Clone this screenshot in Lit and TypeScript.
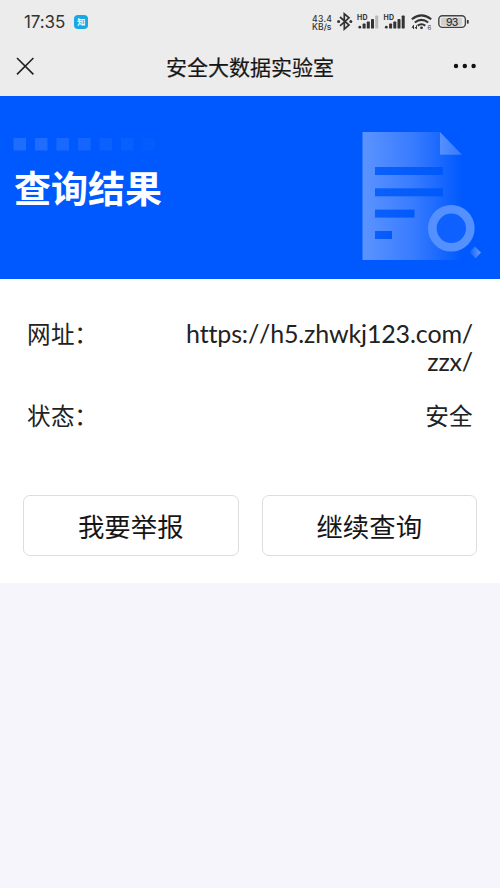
import { LitElement, html, css, svg } from "lit";
import { customElement, property } from "lit/decorators.js";

@customElement("status-bar")
class StatusBar extends LitElement {
  static styles = css`
    :host { display: flex; height: 44px; padding: 0 31px 0 24px; justify-content: space-between; color: #333; }
    .left { display: flex; align-items: center; gap: 9px; height: 44px; }
    .time { font: 400 17px/20px Inter, sans-serif; letter-spacing: -0.1px; }
    .app { box-sizing: border-box; width: 14px; height: 14px; border-radius: 4px; background: #18a9e4; color: #fff; font: bold 8px/14px "Noto Sans CJK SC", sans-serif; text-align: center; }
    svg { display: block; width: 160px; height: 44px; }
    text { font-family: Inter, sans-serif; fill: #333; }
    .rate { font-size: 8.6px; font-weight: 500; }
    .hd { font-size: 7px; font-weight: 700; }
    .battery { font-size: 10.5px; font-weight: 500; }
    .tiny { font-size: 6px; }
  `;

  private bars(x: number, last: string) {
    return svg`
      <circle cx=${x + 2.2} cy="27.2" r="1.4" fill="#333"/>
      ${[5, 7, 9.5, 13].map((h, i) => svg`
        <rect x=${x + 5 + i * 4.2} y=${28.6 - h} width="3" height=${h} rx=".7" fill=${i === 3 ? last : "#333"}/>`)}
    `;
  }

  render() {
    return html`
      <div class="left"><span class="time">17:35</span><span class="app">知</span></div>
      <svg viewBox="309 0 160 44">
        <text class="rate" x="312" y="21.6" textLength="20">43.4</text>
        <text class="rate" x="312" y="30.3" textLength="19.5">KB/s</text>
        <path d="M340 17l9 8-4.7 4.2V13.8l4.7 4-9 8" fill="none" stroke="#333" stroke-width="1.7"/>
        <circle cx="338.6" cy="21.5" r="1.5" fill="#333"/><circle cx="350.8" cy="21.5" r="1.5" fill="#333"/>
        <text class="hd" x="357" y="19.8" textLength="10.6">HD</text>
        ${this.bars(357.6, "#b9b9b9")}
        <text class="hd" x="383.5" y="19.8" textLength="10.6">HD</text>
        ${this.bars(384.1, "#333")}
        <g fill="none" stroke="#333" stroke-width="2">
          <path d="M411.8 19.2q9.7-7.6 19.4 0M414.8 22.5q6.7-5.2 13.4 0M417.7 25.6q3.8-2.8 7.6 0"/>
        </g>
        <circle cx="421.5" cy="27.8" r="1.4" fill="#333"/>
        <path d="M412 28l1.5-2.7V29m3-3.7V29l-1.5-2" fill="none" stroke="#333"/>
        <text class="tiny" x="427.6" y="29.8">6</text>
        <rect x="438.8" y="15.8" width="26.6" height="11.6" rx="3.6" fill="#ececec" stroke="#444" stroke-width="1.4"/>
        <rect x="441" y="17.8" width="21" height="7.6" rx="1.5" fill="#d0d0d0"/>
        <path d="M467.8 20v3.6" stroke="#333" stroke-width="1.7"/>
        <text class="battery" x="446" y="25.5" textLength="12.4">93</text>
      </svg>
    `;
  }
}

@customElement("nav-bar")
class NavBar extends LitElement {
  static styles = css`
    :host { display: grid; grid-template-columns: 20px 1fr 24px; align-items: center; height: 44px; padding: 0 23px 8px 15px; color: #161616; }
    svg { display: block; }
    .title { font: 400 21px/30px "Noto Sans CJK SC", sans-serif; text-align: center; padding-left: 12px; -webkit-text-stroke: .2px #161616; }
  `;
  render() {
    return html`
      <svg width="20" height="20" viewBox="0 0 20 20"><path d="M2 2l16.4 16.4M18.4 2L2 18.4" stroke="#222" stroke-width="1.6"/></svg>
      <div class="title">安全大数据实验室</div>
      <svg width="24" height="20" viewBox="0 0 24 20"><g fill="#111"><circle cx="3" cy="10" r="2.2"/><circle cx="11.8" cy="10" r="2.2"/><circle cx="20.6" cy="10" r="2.2"/></g></svg>
    `;
  }
}

@customElement("result-banner")
class ResultBanner extends LitElement {
  static styles = css`
    :host { box-sizing: border-box; display: flex; justify-content: space-between; height: 183px; background: #0059fe; padding: 36px 18px 0 13px; }
    .dots { display: block; margin-top: 5px; }
    h1 { margin: 9px 0 0 1px; color: #fff; font: 700 37px/54px "Noto Sans CJK SC", sans-serif; }
    svg { display: block; }
  `;
  render() {
    return html`
      <div>
        <svg class="dots" width="150" height="14" viewBox="0 0 150 14">
          ${[0.12, 0.12, 0.1, 0.08, 0.045, 0.03, 0.015].map((o, i) => svg`<rect x=${0.5 + i * 21.5} y="1" width="12.5" height="12.5" fill="#fff" fill-opacity=${o}/>`)}
        </svg>
        <h1>查询结果</h1>
      </div>
      <svg width="120" height="130" viewBox="362 132 120 130">
        <defs>
          <linearGradient id="page" x1="0" x2="1"><stop stop-color="#5c94ff"/><stop offset=".5" stop-color="#397cff"/><stop offset="1" stop-color="#0059fe"/></linearGradient>
          <linearGradient id="line" x1="0" x2="1"><stop stop-color="#0b60fc"/><stop offset="1" stop-color="#0059fa"/></linearGradient>
          <linearGradient id="fold" x1="0" x2="1"><stop stop-color="#5590ff"/><stop offset="1" stop-color="#3679ff"/></linearGradient>
          <linearGradient id="handle" x1="0" x2="1"><stop stop-color="#0f62fe"/><stop offset="1" stop-color="#649bff"/></linearGradient>
        </defs>
        <path d="M362.5 132H440v22.8h22V260h-99.5z" fill="url(#page)"/>
        <path d="M440 132v22.8h22z" fill="url(#fold)"/>
        <g fill="url(#line)"><rect x="375" y="167" width="68" height="8"/><rect x="375" y="188.3" width="68" height="8"/><rect x="375" y="209.6" width="39.5" height="8"/><rect x="375" y="231" width="17" height="8"/></g>
        <circle cx="451.3" cy="228.3" r="19" fill="#0e61fe" stroke="#5590ff" stroke-width="8.6"/>
        <path d="M474.8 246.5l6.2 6-5.3 5.8-6.2-6z" fill="url(#handle)"/>
      </svg>
    `;
  }
}

@customElement("result-row")
class ResultRow extends LitElement {
  @property() label = "";
  @property({ type: Array }) lines: string[] = [];
  @property({ type: Boolean, reflect: true }) link = false;
  static styles = css`
    :host { display: flex; justify-content: space-between; color: #222; font: 23.6px/28px "Noto Sans CJK SC", sans-serif; }
    .label { display: flex; letter-spacing: .5px; white-space: nowrap; }
    .colon { margin-left: -1px; }
    .value { text-align: right; letter-spacing: .3px; }
    :host([link]) .value { font-family: Lato, sans-serif; font-size: 25px; letter-spacing: -.16px; font-variant-ligatures: none; font-kerning: none; }
    .line { white-space: nowrap; }
  `;
  render() {
    return html`
      <div class="label">${this.label}<span class="colon">：</span></div>
      <div class="value">${this.lines.map((l) => html`<div class="line">${l}</div>`)}</div>
    `;
  }
}

@customElement("app-root")
class AppRoot extends LitElement {
  static styles = css`
    :host { display: block; height: 888px; overflow: hidden; background: #f5f5fb; }
    .chrome { height: 96px; background: #ececec; }
    .card { box-sizing: border-box; height: 304px; background: #fff; padding: 40px 23px 0; }
    .rows { display: grid; gap: 26px; padding: 0 4px; }
    .actions { display: grid; grid-template-columns: 1fr 1fr; gap: 23px; margin-top: 66px; }
    button { box-sizing: border-box; height: 61px; border: 1.5px solid #ddd; border-radius: 7px; padding: 0; background: #fff; color: #161616; font: 26.4px/38px "Noto Sans CJK SC", sans-serif; }
  `;
  render() {
    return html`
      <div class="chrome"><status-bar></status-bar><nav-bar></nav-bar></div>
      <result-banner></result-banner>
      <div class="card">
        <div class="rows">
          <result-row link label="网址" .lines=${["https://h5.zhwkj123.com/", "zzx/"]}></result-row>
          <result-row label="状态" .lines=${["安全"]}></result-row>
        </div>
        <div class="actions"><button>我要举报</button><button>继续查询</button></div>
      </div>
    `;
  }
}
